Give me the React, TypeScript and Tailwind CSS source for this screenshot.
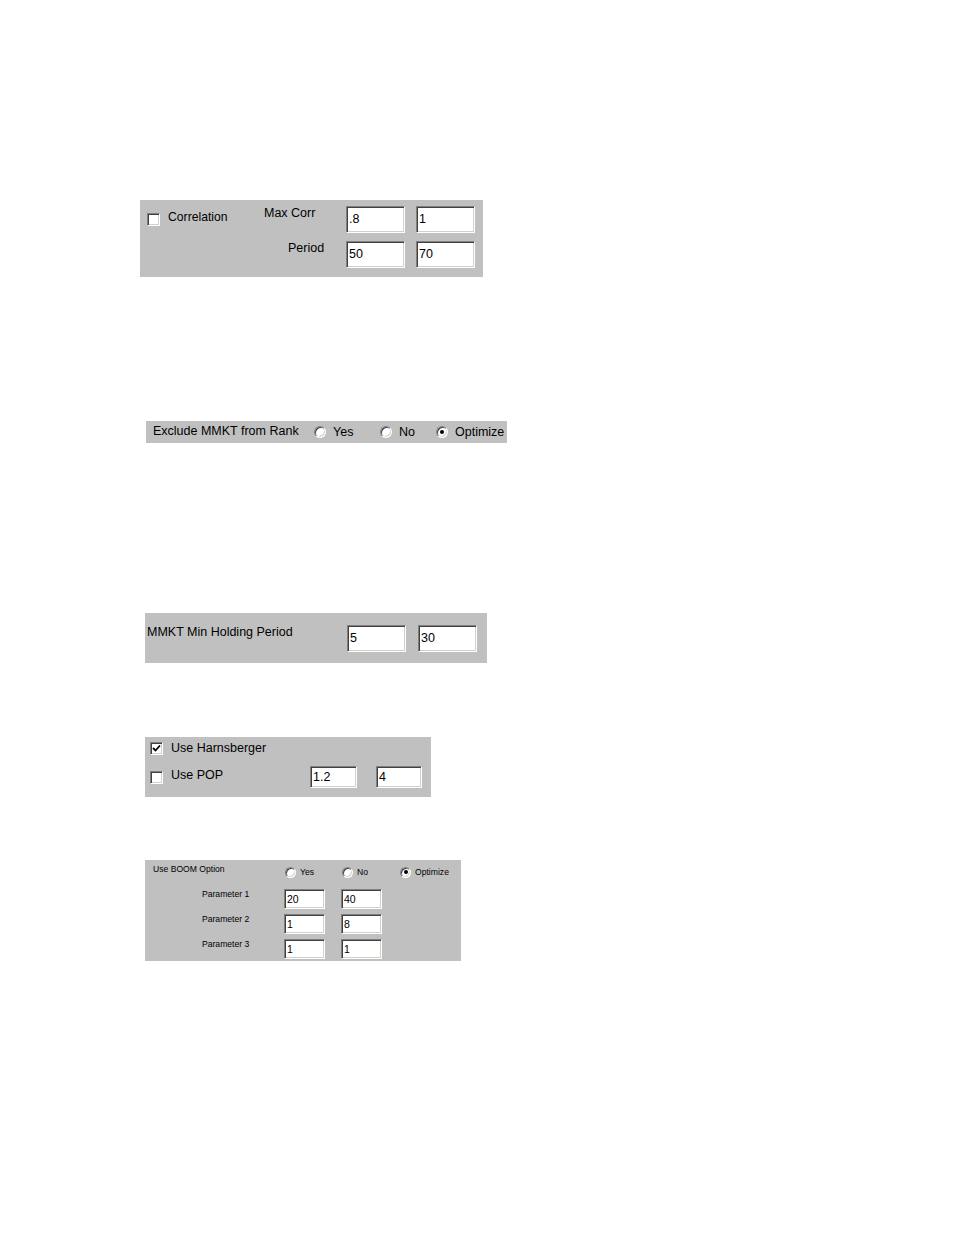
import React from "react";

const font = { fontFamily: '"Liberation Sans", Arial, sans-serif' };

function TextBox({ value, w, h, small }: { value: string; w: string; h: string; small?: boolean }) {
  return (
    <div
      className={`${w} ${h} shrink-0 bg-white border border-t-[#808080] border-l-[#808080] border-r-white border-b-white shadow-[inset_1px_1px_0_#404040,inset_-1px_-1px_0_#d4d0c8] flex items-center pl-[2px] text-black ${
        small ? "text-[10.5px] leading-[12px]" : "text-[12.5px] leading-[15px]"
      }`}
    >
      {value}
    </div>
  );
}

function CheckBox({ checked }: { checked?: boolean }) {
  return (
    <div className="w-[13px] h-[13px] shrink-0 bg-white border border-t-[#808080] border-l-[#808080] border-r-white border-b-white shadow-[inset_1px_1px_0_#404040,inset_-1px_-1px_0_#d4d0c8] flex items-center justify-center">
      {checked && (
        <svg width="9" height="9" viewBox="0 0 9 9">
          <path d="M1 4 L3.5 6.5 L8 1.5" stroke="#000" strokeWidth="1.8" fill="none" />
        </svg>
      )}
    </div>
  );
}

function Radio({ selected, size = "w-[12px] h-[12px]" }: { selected?: boolean; size?: string }) {
  return (
    <div
      className={`${size} shrink-0 rounded-full bg-white border border-t-[#808080] border-l-[#808080] border-r-white border-b-white shadow-[inset_1px_1px_0_#404040,inset_-1px_-1px_0_#d4d0c8] flex items-center justify-center`}
    >
      {selected && <div className="w-[4px] h-[4px] rounded-full bg-black" />}
    </div>
  );
}

export default function App() {
  return (
    <div className="w-[954px] min-h-[1235px] bg-white flex flex-col text-black" style={font}>
      {/* Panel 1: Correlation */}
      <div className="mt-[200px] ml-[140px] w-[343px] h-[77px] bg-[#c0c0c0] flex flex-col pt-[6px]">
        <div className="flex h-[27px]">
          <div className="w-[124px] flex items-start pl-[7px]">
            <div className="mt-[7px]">
              <CheckBox />
            </div>
            <span className="ml-[8px] mt-[4px] text-[12.2px] leading-[15px]">Correlation</span>
          </div>
          <div className="w-[82px] text-[12.5px] leading-[15px]">Max Corr</div>
          <TextBox value=".8" w="w-[59px]" h="h-[27px]" />
          <div className="w-[11px]" />
          <TextBox value="1" w="w-[59px]" h="h-[27px]" />
        </div>
        <div className="flex h-[27px] mt-[8px]">
          <div className="w-[148px]" />
          <div className="w-[58px] text-[12.5px] leading-[15px]">Period</div>
          <TextBox value="50" w="w-[59px]" h="h-[27px]" />
          <div className="w-[11px]" />
          <TextBox value="70" w="w-[59px]" h="h-[27px]" />
        </div>
      </div>

      {/* Panel 2: Exclude MMKT */}
      <div className="mt-[144px] ml-[146px] w-[361px] h-[22px] bg-[#c0c0c0] flex items-center pl-[7px] text-[12.5px] leading-[15px]">
        <div className="w-[161px] mb-[1px]">Exclude MMKT from Rank</div>
        <div className="w-[66px] flex items-center">
          <Radio />
          <span className="ml-[7px]">Yes</span>
        </div>
        <div className="w-[56px] flex items-center">
          <Radio />
          <span className="ml-[7px]">No</span>
        </div>
        <div className="flex items-center">
          <Radio selected />
          <span className="ml-[7px]">Optimize</span>
        </div>
      </div>

      {/* Panel 3: MMKT Min Holding Period */}
      <div className="mt-[170px] ml-[145px] w-[342px] h-[50px] bg-[#c0c0c0] flex items-start pt-[12px]">
        <div className="w-[202px] pl-[2px] text-[12.5px] leading-[15px]">MMKT Min Holding Period</div>
        <TextBox value="5" w="w-[59px]" h="h-[27px]" />
        <div className="w-[12px]" />
        <TextBox value="30" w="w-[59px]" h="h-[27px]" />
      </div>

      {/* Panel 4: Harnsberger / POP */}
      <div className="mt-[74px] ml-[145px] w-[286px] h-[60px] bg-[#c0c0c0] flex flex-col text-[12.5px] leading-[15px]">
        <div className="flex items-center h-[15px] mt-[4px] pl-[5px]">
          <CheckBox checked />
          <span className="ml-[8px]">Use Harnsberger</span>
        </div>
        <div className="flex items-start h-[22px] mt-[10px]">
          <div className="w-[165px] flex items-start pl-[5px]">
            <div className="mt-[5px]">
              <CheckBox />
            </div>
            <span className="ml-[8px] mt-[2px]">Use POP</span>
          </div>
          <TextBox value="1.2" w="w-[47px]" h="h-[22px]" />
          <div className="w-[19px]" />
          <TextBox value="4" w="w-[46px]" h="h-[22px]" />
        </div>
      </div>

      {/* Panel 5: BOOM Option */}
      <div className="mt-[63px] ml-[145px] w-[316px] h-[101px] bg-[#c0c0c0] flex flex-col pt-[5px] text-[8.6px] leading-[11px]">
        <div className="flex items-center h-[14px]">
          <div className="w-[140px] pl-[8px] mb-[5px]">Use BOOM Option</div>
          <div className="w-[57px] flex items-center">
            <Radio size="w-[11px] h-[11px]" />
            <span className="ml-[4px]">Yes</span>
          </div>
          <div className="w-[58px] flex items-center">
            <Radio size="w-[11px] h-[11px]" />
            <span className="ml-[4px]">No</span>
          </div>
          <div className="flex items-center">
            <Radio selected size="w-[11px] h-[11px]" />
            <span className="ml-[4px]">Optimize</span>
          </div>
        </div>
        {[
          ["Parameter 1", "20", "40"],
          ["Parameter 2", "1", "8"],
          ["Parameter 3", "1", "1"],
        ].map(([label, a, b], i) => (
          <div key={label} className={`flex items-start h-[20px] ${i === 0 ? "mt-[10px]" : "mt-[5px]"}`}>
            <div className="w-[139px] pl-[57px] mt-[0px]">{label}</div>
            <TextBox value={a} w="w-[41px]" h="h-[20px]" small />
            <div className="w-[16px]" />
            <TextBox value={b} w="w-[41px]" h="h-[20px]" small />
          </div>
        ))}
      </div>
    </div>
  );
}
